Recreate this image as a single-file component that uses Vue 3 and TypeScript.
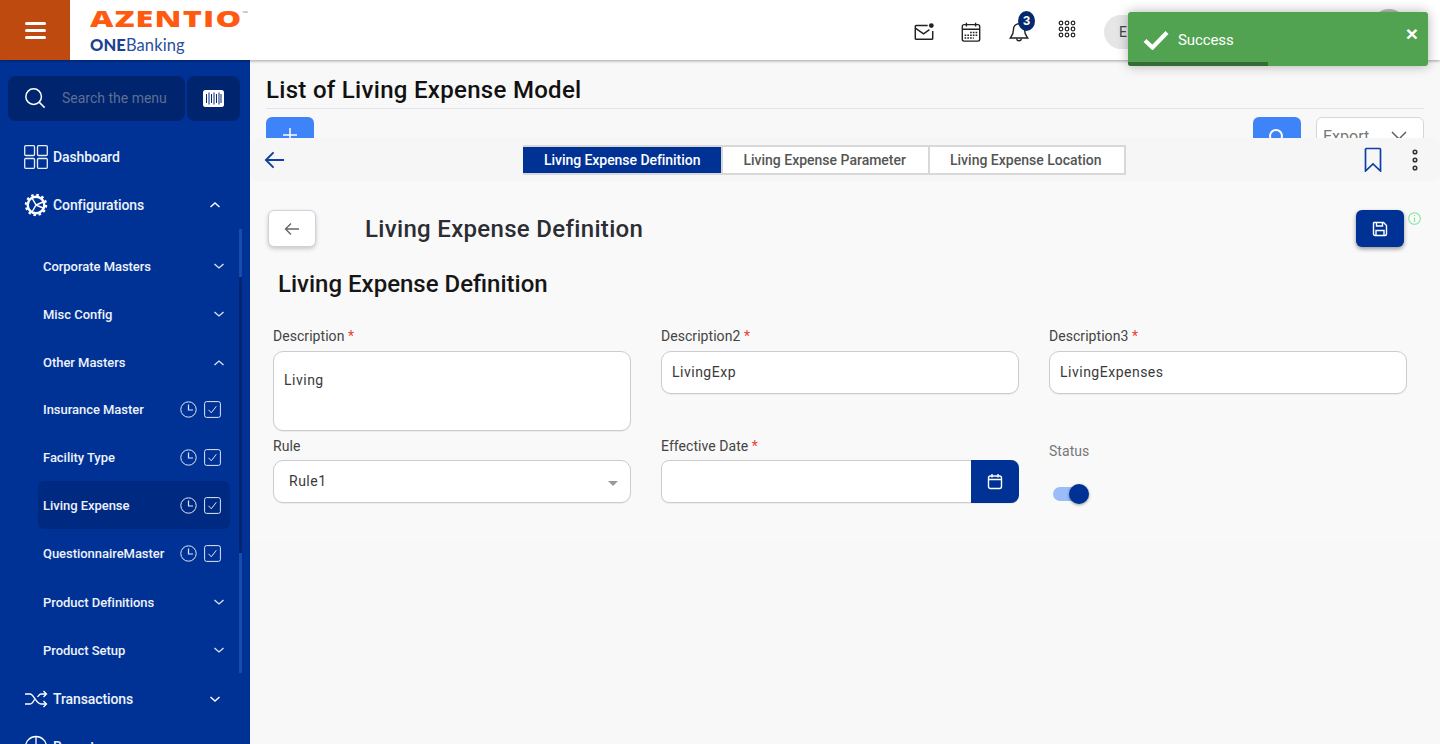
<script setup lang="ts">
interface MenuRow { label: string; icon: 'chev' | 'up' | 'pair'; active?: boolean }
const rows: MenuRow[] = [
  { label: 'Corporate Masters', icon: 'chev' },
  { label: 'Misc Config', icon: 'chev' },
  { label: 'Other Masters', icon: 'up' },
  { label: 'Insurance Master', icon: 'pair' },
  { label: 'Facility Type', icon: 'pair' },
  { label: 'Living Expense', icon: 'pair', active: true },
  { label: 'QuestionnaireMaster', icon: 'pair' },
  { label: 'Product Definitions', icon: 'chev' },
  { label: 'Product Setup', icon: 'chev' },
]
</script>

<template>
  <div class="app">
    <header class="topbar">
      <button class="burger" aria-label="Menu"><span></span><span></span><span></span></button>
      <div class="logo">
        <div class="logo-main">AZENTIO<sup>™</sup></div>
        <div class="logo-sub"><b>ONE</b>Banking</div>
      </div>
      <div class="top-actions">
        <svg class="ti" viewBox="0 0 24 24" fill="none" stroke="#222" stroke-width="1.6"><path d="M16 5H3.500a1 1 0 0 0-1 1v13a1 1 0 0 0 1 1h17a1 1 0 0 0 1-1v-8"/><path d="M3 8l8.500 6L18 9.500"/><circle cx="20" cy="5" r="2.600" fill="#222" stroke="none"/></svg>
        <svg class="ti" viewBox="0 0 24 24" fill="none" stroke="#222" stroke-width="1.500"><rect x="2.500" y="4" width="19" height="18" rx="2"/><path d="M2.500 9h19M7 2v4M17 2v4"/><path stroke-dasharray="1.800 1.200" stroke-width="1.800" d="M11 12.500h8M5 15.500h14M5 18.500h10"/></svg>
        <div class="bell">
          <svg class="ti" viewBox="0 0 24 24" fill="none" stroke="#222" stroke-width="1.500"><path d="M12 3a6 6 0 0 0-6 6c0 6-2.500 8-3.500 9.500h19C20.500 17 18 15 18 9a6 6 0 0 0-6-6z"/><path d="M9.500 19a2.500 2.500 0 0 0 5 0"/></svg>
          <span class="badge">3</span>
        </div>
        <svg class="ti grid" viewBox="0 0 18 18" fill="none" stroke="#222" stroke-width="1.200"><circle v-for="p in [[3,3],[9,3],[15,3],[3,9],[9,9],[15,9],[3,15],[9,15],[15,15]]" :key="p.join()" :cx="p[0]" :cy="p[1]" r="1.800"/></svg>
        <div class="lang">E</div>
        <div class="avatar"></div>
      </div>
    </header>

    <div class="body">
      <aside class="sidebar">
        <div class="search-row">
          <div class="search-box">
            <svg width="22" height="22" viewBox="0 0 24 24" fill="none" stroke="#fff" stroke-width="1.600"><circle cx="10.500" cy="10.500" r="8.500"/><path d="M16.500 16.500l6 6"/></svg>
            <span>Search the menu</span>
          </div>
          <div class="scan">
            <svg width="21" height="17" viewBox="0 0 21 17"><rect width="21" height="17" rx="2.500" fill="#fff"/><path d="M3.500 4v9M6 2.500v12M8.500 4v9M11 2.500v12M13.500 4v9M16 2.500v12M18 4v9" stroke="#00287c" stroke-width="1"/></svg>
          </div>
        </div>

        <div class="menu-top">
          <svg width="24" height="24" viewBox="0 0 24 24" fill="none" stroke="#e8edf8" stroke-width="1.300"><rect x=".7" y=".7" width="9.800" height="9.800" rx="1"/><rect x="13.500" y=".7" width="9.800" height="9.800" rx="1"/><rect x=".7" y="13.500" width="9.800" height="9.800" rx="1"/><rect x="13.500" y="13.500" width="9.800" height="9.800" rx="1"/></svg>
          <span>Dashboard</span>
        </div>
        <div class="menu-top">
          <svg width="24" height="24" viewBox="0 0 24 24" fill="none" stroke="#fff"><circle cx="12" cy="12" r="8.300" stroke-width="2.400"/><circle cx="12" cy="12" r="10" stroke-width="2.400" stroke-dasharray="2.500 2.740"/><path d="M12 12l7-3M12 12l7 3M12 12l-4-7M12 12l-4 7" stroke-width="1.500"/></svg>
          <span>Configurations</span>
          <svg class="chev" viewBox="0 0 12 8" fill="none" stroke="#fff" stroke-width="1.400"><path d="M1.500 6l4.500-4 4.500 4"/></svg>
        </div>

        <div class="submenu">
          <div v-for="r in rows" :key="r.label" class="sub-row" :class="{ active: r.active }">
            <span class="sub-label">{{ r.label }}</span>
            <svg v-if="r.icon === 'chev'" class="chev sub" viewBox="0 0 12 8" fill="none" stroke="#dfe6f5" stroke-width="1.300"><path d="M1.500 2l4.500 4 4.500-4"/></svg>
            <svg v-else-if="r.icon === 'up'" class="chev sub" viewBox="0 0 12 8" fill="none" stroke="#dfe6f5" stroke-width="1.300"><path d="M1.500 6l4.500-4 4.500 4"/></svg>
            <span v-else class="pair">
              <svg width="17" height="17" viewBox="0 0 17 17" fill="none" stroke="#dfe6f5" stroke-width="1"><circle cx="8.500" cy="8.500" r="7.700"/><path d="M8.500 3.500v5.500h4.500" stroke-width="1.200"/></svg>
              <svg width="17" height="17" viewBox="0 0 17 17" fill="none" stroke="#dfe6f5" stroke-width="1"><rect x=".6" y=".6" width="15.800" height="15.800" rx="2"/><path d="M4.500 8.800l2.800 3 5-6.500"/></svg>
            </span>
          </div>
          <i class="scroll-track"></i>
          <i class="scroll-thumb"></i>
        </div>

        <div class="menu-top">
          <svg width="24" height="24" viewBox="0 0 24 24" fill="none" stroke="#fff" stroke-width="1.300"><path d="M1 7h5c4 0 6 10 11 10h5M1 17h5c2 0 3.500-2.500 4.500-4.500M13.500 10c1-1.500 2-3 3.500-3h5M19.500 4l3 3-3 3M19.500 14l3 3-3 3"/></svg>
          <span>Transactions</span>
          <svg class="chev" viewBox="0 0 12 8" fill="none" stroke="#fff" stroke-width="1.400"><path d="M1.500 2l4.500 4 4.500-4"/></svg>
        </div>
        <div class="menu-top">
          <svg width="24" height="24" viewBox="0 0 24 24" fill="none" stroke="#fff" stroke-width="1.300"><circle cx="12" cy="12" r="10.500"/><path d="M12 1.500V12H1.500"/></svg>
          <span>Reports</span>
        </div>
      </aside>

      <main class="main">
        <section class="list-page">
          <h1>List of Living Expense Model</h1>
          <div class="list-tools">
            <button class="blue-btn plus">
              <svg width="14" height="14" viewBox="0 0 14 14" stroke="#fff" stroke-width="1.500"><path d="M7 0v14M0 7h14"/></svg>
            </button>
            <div class="spacer"></div>
            <button class="blue-btn">
              <svg width="18" height="18" viewBox="0 0 18 18" fill="none" stroke="#fff" stroke-width="2"><circle cx="8" cy="8" r="6"/><path d="M12.500 12.500L17 17"/></svg>
            </button>
            <div class="export">
              <span>Export</span>
              <svg width="16" height="10" viewBox="0 0 16 10" fill="none" stroke="#555" stroke-width="1.400"><path d="M1 1l7 7 7-7"/></svg>
            </div>
          </div>
        </section>

        <section class="overlay">
          <div class="tabbar">
            <svg class="back-arrow" width="21" height="18" viewBox="0 0 22 18" fill="none" stroke="#0e3fa4" stroke-width="2"><path d="M21 9H2M10 1L2 9l8 8"/></svg>
            <div class="tabs">
              <div class="tab on">Living Expense Definition</div>
              <div class="tab">Living Expense Parameter</div>
              <div class="tab">Living Expense Location</div>
            </div>
            <svg class="bookmark" width="18" height="25" viewBox="0 0 18 25" fill="none" stroke="#0e3fa4" stroke-width="1.700"><path d="M1.500 24V2.500a1 1 0 0 1 1-1h13a1 1 0 0 1 1 1V24L9 17z"/></svg>
            <svg class="dots" width="6" height="24" viewBox="0 0 6 24" fill="none" stroke="#333" stroke-width="1.500"><circle cx="3" cy="4" r="1.800"/><circle cx="3" cy="12" r="1.800"/><circle cx="3" cy="20" r="1.800"/></svg>
          </div>

          <div class="def-panel">
            <div class="def-head">
              <button class="white-back">
                <svg width="16" height="14" viewBox="0 0 16 14" fill="none" stroke="#666" stroke-width="1.400"><path d="M15 7H1.500M7 1.500L1.500 7 7 12.500"/></svg>
              </button>
              <h2>Living Expense Definition</h2>
              <div class="spacer"></div>
              <button class="save">
                <svg width="16" height="16" viewBox="0 0 16 16" fill="none" stroke="#fff" stroke-width="1.400"><path d="M2 1.500h9.500L14.500 4.500V13a1.500 1.500 0 0 1-1.500 1.500H3A1.500 1.500 0 0 1 1.500 13V2z"/><path d="M4.500 1.500v3.500h6V1.500M4 14.500V9.500h8v5"/></svg>
              </button>
              <svg class="info" width="13" height="13" viewBox="0 0 13 13" fill="none" stroke="#7fe59a" stroke-width="1.100"><circle cx="6.500" cy="6.500" r="5.800"/><path d="M6.500 3v.9M6.500 5.500v4.500"/></svg>
            </div>

            <h3>Living Expense Definition</h3>

            <div class="form">
              <div class="field">
                <label>Description <em>*</em></label>
                <div class="ctl textarea">Living</div>
              </div>
              <div class="field">
                <label>Description2 <em>*</em></label>
                <div class="ctl">LivingExp</div>
              </div>
              <div class="field">
                <label>Description3 <em>*</em></label>
                <div class="ctl">LivingExpenses</div>
              </div>
              <div class="field tight">
                <label>Rule</label>
                <div class="ctl select">Rule1<i class="caret"></i></div>
              </div>
              <div class="field tight">
                <label>Effective Date <em>*</em></label>
                <div class="ctl date">
                  <span class="date-btn">
                    <svg width="16" height="17" viewBox="0 0 16 17" fill="none" stroke="#fff" stroke-width="1.400"><rect x="1.500" y="3" width="13" height="12.500" rx="2"/><path d="M1.500 6.500h13M5 1v3.500M11 1v3.500"/></svg>
                  </span>
                </div>
              </div>
              <div class="field tight status">
                <label>Status</label>
                <div class="switch"><i></i></div>
              </div>
            </div>
          </div>
        </section>
      </main>
    </div>

    <div class="toast">
      <svg width="26" height="20" viewBox="0 0 26 20" fill="none" stroke="#fff" stroke-width="4.200"><path d="M2 10.500l7.500 7L24 2.500"/></svg>
      <span>Success</span>
      <b class="close">×</b>
      <i class="progress"></i>
    </div>
  </div>
</template>

<style>
html, body { margin: 0; padding: 0; overflow: hidden; }
</style>

<style scoped>
.app {
  position: relative;
  width: 1440px;
  height: 744px;
  overflow: hidden;
  display: flex;
  flex-direction: column;
  font-family: Roboto, "Liberation Sans", sans-serif;
  background: #f8f8f8;
}
.topbar {
  position: relative;
  z-index: 3;
  height: 60px;
  flex: none;
  display: flex;
  align-items: center;
  background: #fff;
  box-shadow: 0 1px 3px rgba(0, 0, 0, .35);
}
.burger {
  width: 70px;
  height: 60px;
  flex: none;
  border: 0;
  padding: 0;
  background: #bf4a0f;
  display: flex;
  flex-direction: column;
  align-items: center;
  justify-content: center;
  gap: 4px;
}
.burger span { width: 21px; height: 3px; background: #fff; border-radius: 2px; }
.logo { margin-left: 20px; width: 170px; }
.logo-main {
  font: 800 22px/20px "Open Sans", sans-serif;
  letter-spacing: .8px;
  color: #ff5a0f;
  transform: scaleX(1.470);
  transform-origin: left;
  margin-top: 2px;
}
.logo-main sup { font-size: 5px; color: #888; font-weight: 400; letter-spacing: 0; vertical-align: 12px; line-height: 0; }
.logo-sub { font: 400 16.500px/20px Lato, sans-serif; color: #2a4f9c; margin-top: 7px; letter-spacing: .1px; }
.logo-sub b { font-weight: 900; color: #1c428f; }
.top-actions { flex: 1; height: 60px; box-sizing: border-box; position: relative; display: flex; align-items: center; padding: 4px 0 0 653px; }
.ti { width: 22px; height: 22px; flex: none; margin-right: 25px; }
.grid { width: 18px; height: 18px; margin: -6px 0 0 4px; }
.bell { position: relative; width: 22px; height: 22px; margin: 0 24px 0 1px; }
.bell .ti { margin: 0; display: block; }
.badge {
  position: absolute;
  left: 10px;
  top: -10px;
  width: 17px;
  height: 20px;
  border-radius: 50%;
  background: #06296e;
  color: #fff;
  font: 700 13px/20px "Liberation Sans", sans-serif;
  text-align: center;
}
.lang {
  width: 70px;
  height: 34px;
  margin-left: 28px;
  padding-left: 15px;
  box-sizing: border-box;
  border-radius: 17px;
  background: #e6e6e6;
  color: #444;
  font-size: 14px;
  line-height: 34px;
}
.avatar { position: absolute; left: 1112px; top: 9px; width: 34px; height: 34px; border-radius: 50%; background: #bbb; }

.body { flex: 1; min-height: 0; display: flex; }
.sidebar {
  width: 250px;
  flex: none;
  box-sizing: border-box;
  padding: 16px 0 0;
  background: #003296;
  overflow: hidden;
  color: #eef2fa;
}
.search-row { display: flex; gap: 2px; padding: 0 10px 0 8px; height: 45px; }
.search-box {
  width: 177px;
  box-sizing: border-box;
  padding: 0 0 2px 16px;
  display: flex;
  align-items: center;
  gap: 16px;
  background: #00246e;
  border-radius: 8px;
  color: #5d6f94;
  font-size: 14px;
}
.scan {
  flex: 1;
  display: flex;
  align-items: center;
  justify-content: center;
  background: #00246e;
  border-radius: 8px;
}
.menu-top {
  height: 48px;
  display: flex;
  align-items: center;
  padding-left: 24px;
  gap: 5px;
  font-size: 14px;
  font-weight: 500;
  letter-spacing: -.1px;
}
.menu-top .chev { margin-left: auto; margin-right: 29px; }
.search-row + .menu-top { margin-top: 12px; }
.chev { width: 12px; height: 8px; flex: none; }
.submenu { position: relative; height: 446px; padding-top: 13px; box-sizing: border-box; }
.sub-row {
  height: 48px;
  width: 192px;
  margin-left: 38px;
  box-sizing: border-box;
  padding-left: 5px;
  display: flex;
  align-items: center;
  border-radius: 6px;
  font-size: 13px;
  font-weight: 500;
  letter-spacing: -.04px;
}
.sub-row:nth-child(3) { height: 47px; padding-top: 2px; }
.sub-row:nth-child(7) { height: 49px; }
.sub-row.active { background: #002a82; }
.sub-label { flex: 1; white-space: nowrap; }
.chev.sub { margin-right: 5px; }
.pair { display: flex; gap: 7px; margin-right: 9px; }
.scroll-track { position: absolute; left: 239px; top: 0; width: 3px; height: 444px; background: #1a4cb0; }
.scroll-thumb { position: absolute; left: 239px; top: 48px; width: 3px; height: 276px; background: #002470; }

.main { position: relative; flex: 1; min-width: 0; background: #f8f8f8; }
.list-page { padding: 16px 16px 0; }
.list-page h1 {
  margin: 0;
  padding: 0 0 3px;
  font-size: 24px;
  line-height: 29px;
  font-weight: 500;
  color: #111;
  border-bottom: 1px solid #e3e3ea;
  letter-spacing: .3px;
}
.list-tools { display: flex; margin-top: 8px; }
.spacer { flex: 1; }
.blue-btn {
  width: 48px;
  height: 48px;
  border: 0;
  border-radius: 6px;
  background: #3f83f8;
  display: flex;
  justify-content: center;
  padding-top: 11px;
}
.export {
  width: 108px;
  height: 40px;
  margin: 0 0 0 15px;
  box-sizing: border-box;
  padding: 0 16px 2px 6px;
  display: flex;
  justify-content: space-between;
  align-items: center;
  border: 1px solid #d5d7de;
  border-radius: 6px;
  background: #fff;
  color: #777;
  font-size: 16px;
}
.overlay {
  position: absolute;
  inset: 78px 0 0 0;
  background: #f8f8f8;
  border-radius: 6px 0 0 0;
}
.tabbar {
  height: 43px;
  display: flex;
  align-items: center;
  position: relative;
  background: #f6f6f6;
  border-radius: 8px;
}
.back-arrow { margin-left: 14px; }
.tabs { margin-left: 238px; display: flex; background: #d8d8d8; gap: 2px; height: 30px; box-sizing: border-box; padding: 2px 2px 2px 0; }
.tab {
  height: 26px;
  padding: 0 22px 0 20px;
  background: #fff;
  color: #555;
  font-size: 14px;
  font-weight: 500;
  line-height: 26px;
  white-space: nowrap;
  letter-spacing: 0;
}
.tab.on { background: #003296; color: #fff; padding: 0 21px; letter-spacing: -.05px; }
.tab:last-child { padding-right: 23px; }
.bookmark { margin-left: auto; margin-right: 30px; }
.dots { margin-right: 22px; }
.def-panel { background: #f9f9f9; padding: 29px 36px 0 18px; height: 360px; box-sizing: border-box; }
.def-head { display: flex; align-items: flex-start; position: relative; height: 38px; }
.white-back {
  width: 48px;
  height: 37px;
  border: 1px solid #cfd2da;
  border-radius: 6px;
  background: #fff;
  box-shadow: 0 2px 4px rgba(0, 0, 0, .2);
  padding: 0;
  display: flex;
  align-items: center;
  justify-content: center;
}
.def-head h2 { margin: 3px 0 0 49px; font-size: 24px; line-height: 32px; font-weight: 500; color: #2b2d33; letter-spacing: .32px; }
.save {
  width: 48px;
  height: 37px;
  border: 0;
  border-radius: 6px;
  background: #003296;
  box-shadow: 0 2px 4px rgba(0, 0, 0, .4);
  padding: 0;
  display: flex;
  align-items: center;
  justify-content: center;
}
.info { position: absolute; right: -17px; top: 2px; }
h3 { margin: 20px 0 0 10px; font-size: 24px; line-height: 32px; font-weight: 500; color: #161616; letter-spacing: 0; }
.form { display: grid; grid-template-columns: 358px 358px 358px; column-gap: 30px; margin: 26px 0 0 5px; }
.field { display: flex; flex-direction: column; }
.field.tight { margin-top: 5px; }
label { font-size: 14px; line-height: 20px; color: #444; height: 20px; margin-bottom: 5px; letter-spacing: .05px; }
.tight label { margin-bottom: 4px; }
em { font-style: normal; color: #ef3b3b; }
.ctl {
  height: 43px;
  box-sizing: border-box;
  border: 1px solid #cbccd0;
  border-radius: 10px;
  background: #fff;
  padding: 0 10px;
  color: #3a3a3a;
  font-size: 14px;
  line-height: 41px;
  letter-spacing: .5px;
  box-shadow: 0 1px 1px rgba(0, 0, 0, .06);
}
.textarea { height: 80px; line-height: 56px; }
.select { padding-left: 15px; position: relative; }
.caret { position: absolute; right: 12px; top: 20px; border: 5px solid transparent; border-top: 5px solid #999; border-bottom: 0; }
.date { position: relative; padding: 0; border-radius: 8px; }
.date-btn {
  position: absolute;
  right: -1px;
  top: -1px;
  bottom: -1px;
  width: 48px;
  border-radius: 0 8px 8px 0;
  background: #003296;
  display: flex;
  align-items: center;
  justify-content: center;
}
.status label { margin: 5px 0 23px; color: #777; }
.switch { position: relative; width: 36px; height: 20px; }
.switch::before { content: ""; position: absolute; left: 4px; top: 3px; width: 26px; height: 14px; border-radius: 7px; background: #9abcf8; }
.switch i { position: absolute; left: 20px; top: 0; width: 20px; height: 20px; border-radius: 50%; background: #003296; box-shadow: 0 1px 3px rgba(0, 0, 0, .4); }

.toast {
  position: absolute;
  z-index: 5;
  left: 1128px;
  top: 12px;
  width: 300px;
  height: 54px;
  box-sizing: border-box;
  padding: 2px 0 0 15px;
  display: flex;
  align-items: center;
  gap: 9px;
  background: #51a351;
  border-radius: 3px;
  color: #fff;
  font-size: 15px;
  letter-spacing: -.1px;
  box-shadow: 0 0 12px rgba(0, 0, 0, .3);
  overflow: hidden;
}
.close { position: absolute; right: 10px; top: 10px; font: 700 21px/24px "Liberation Sans", sans-serif; }
.progress { position: absolute; left: 0; bottom: 0; width: 140px; height: 4px; background: #356b35; }
</style>
